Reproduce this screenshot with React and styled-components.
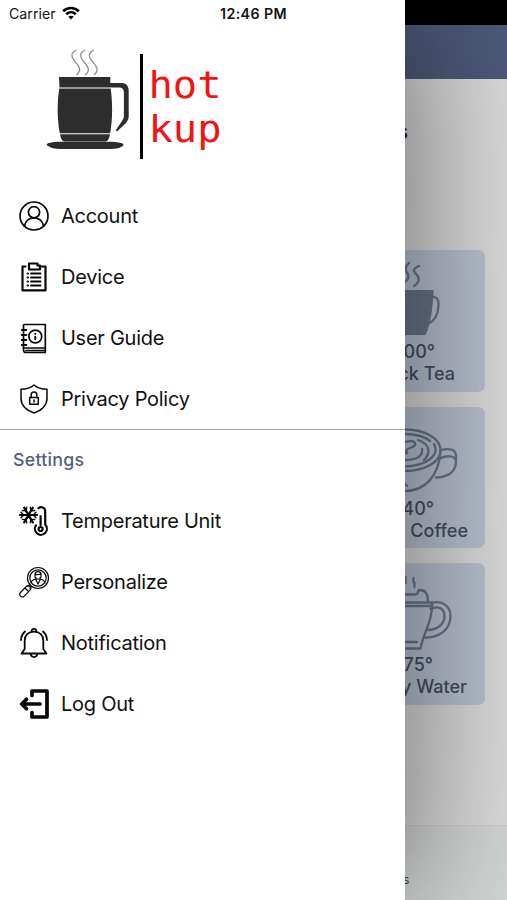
import React from 'react';
import styled, { createGlobalStyle } from 'styled-components';

const MENU = [
  { label: 'Account', icon: 'account' },
  { label: 'Device', icon: 'device' },
  { label: 'User Guide', icon: 'guide' },
  { label: 'Privacy Policy', icon: 'privacy' },
];

const SETTINGS = [
  { label: 'Temperature Unit', icon: 'temperature' },
  { label: 'Personalize', icon: 'personalize' },
  { label: 'Notification', icon: 'notification' },
  { label: 'Log Out', icon: 'logout' },
];

const DRINKS = [
  { temp: '00°', name: 'ck Tea', icon: 'tea', pad: 30, tempPad: 50 },
  { temp: '40°', name: 'Coffee', icon: 'coffee', pad: 17, tempPad: 51 },
  { temp: '75°', name: 'y Water', icon: 'water', pad: 18, tempPad: 52 },
];

const icons = {
  account: (
    <g strokeWidth="1.7">
      <circle cx="16" cy="16" r="14" />
      <circle cx="16" cy="12.2" r="5.6" />
      <path d="M6.500 26c.5-5 4.500-8.200 9.500-8.200s9 3.200 9.500 8.200" />
    </g>
  ),
  device: (
    <g strokeWidth="2.2">
      <path d="M7.500 5.500h-3v23.800h23V5.500H23" />
      <path d="M11 8.500v-6h8.500v2H22v4z" />
      <path
        d="M9.500 12.500h.5M13 12.500h9.500M9.500 16.500h.5M13 16.500h9.500M9.500 20.500h.5M13 20.500h9.500M9.500 24.500h.5M13 24.500h9.500"
        strokeWidth="1.9"
      />
    </g>
  ),
  guide: (
    <g strokeWidth="1.7">
      <path d="M6 2.500h21.300v28H8c-1.700 0-2.500-1-2.500-2.500V3M6 26h21M8 28.500h19" />
      <path d="M3.800 8h4.500M3.800 13h4.500M3.800 18h4.500M3.800 23h4.500" strokeWidth="2" />
      <circle cx="17.300" cy="14.500" r="6.400" />
      <path d="M17.300 11.800v.2M17.300 14.800v2.500" strokeWidth="2" />
    </g>
  ),
  privacy: (
    <g strokeWidth="1.5">
      <path d="M16 2c3.500 3 8 4.200 13 4.300v9C29 22.500 23 27.500 16 30 9 27.500 3 22.500 3 15.300v-9C8 6.200 12.500 5 16 2z" />
      <rect x="11.700" y="14.500" width="8.600" height="6.700" />
      <path d="M13.200 14.500v-2.700c0-3.700 5.600-3.700 5.600 0v2.700M16 17v2" />
    </g>
  ),
  temperature: (
    <g strokeWidth="2.2">
      <path d="M2 10h17M6.200 2.600l8.600 14.800M14.800 2.600L6.200 17.400" />
      <path
        d="M3 7.300L5.700 10 3 12.700M18 7.300L15.300 10l2.700 2.700M4.300 5.500l3.700.3M8.800 2.200L8 5.800M16.700 5.500l-3.700.3M12.200 2.200l.8 3.600M4.300 14.500l3.700-.3M8.800 17.800L8 14.200M16.700 14.500l-3.700-.3M12.200 17.800l.8-3.600"
        strokeWidth="1.3"
      />
      <path d="M20.500 3.200c2.500-2 6.700-1 6.700 3v13.400a6 6 0 1 1-9.200.7" />
      <path d="M22.600 11v9" />
      <circle cx="22.600" cy="24" r="2" />
    </g>
  ),
  personalize: (
    <g strokeWidth="1.2">
      <circle cx="20" cy="12" r="10.500" />
      <circle cx="20" cy="12" r="8.200" />
      <path d="M13 17c.5-2.500 2-3.500 5-4v-1.500M27 17c-.5-2.500-2-3.500-5-4v-1.500M17 11V8c.3-3.200 5.700-3.200 6 0v3c-1 3-5 3-6 0zM17 8.500c3 .5 4-.5 6 0M18 14l2 4 2-4" />
      <path d="M11.700 18.500l-1.800 1.800M13.700 20.300l-1.900 1.900M8.800 20l-6.300 6.500c-2.300 2.500 1.300 6 3.700 3.700l6.300-6.500c1.500-2-1.700-5.200-3.700-3.700zM7 22l3.500 3.500" />
    </g>
  ),
  notification: (
    <g strokeWidth="1.8">
      <path d="M3.500 26.500h25L25.300 22v-8.500c0-5-3.500-8.800-9.300-8.800s-9.300 3.800-9.300 8.800V22z" />
      <path d="M13.800 4.800C12.500.8 19.500.8 18.200 4.800M12.800 27c.3 4 6.100 4 6.400 0M7 4.500C4.500 6.500 3.300 9.500 3 13M25 4.500c2.500 2 3.700 5 4 8.500" />
    </g>
  ),
  logout: (
    <g strokeWidth="3.7">
      <path d="M14 7.500V3h15v26H14v-4.500" />
      <path d="M22 16H5M8.500 11.300L3.700 16l4.800 4.700" />
    </g>
  ),
};

const MenuRow = ({ item }) => (
  <Row>
    <LineIcon viewBox="0 0 32 32">{icons[item.icon]}</LineIcon>
    <Label>{item.label}</Label>
  </Row>
);

const MugLogo = () => (
  <Mug viewBox="0 0 84 102">
    <g fill="none" stroke="#8c8c8c" strokeWidth="1.3">
      <path d="M30.500 2c-6 3-5.500 7-2 11s8.500 9 2 14" />
      <path d="M39.200 2c-6 3-5.500 7-2 11s8.500 9 2 14" />
      <path d="M47.900 2c-6 3-5.500 7-2 11s8.500 9 2 14" />
    </g>
    <path
      d="M13 29h51.300v6H76c4 0 6.700 3 6.700 7.500v26c0 2.500-1 4.200-2.700 6.500L71 83.500l-1.200-1.200 6.200-9.300c1.300-2 1.900-2.800 1.900-5V44.500c0-3.500-1.600-5-4.900-5h-8.500C66.500 52 67 72 64 86c-.8 4-1.500 7-4.500 7.500h-41c-3-.5-3.700-3.500-4.500-7.500-3-14-3-34-.5-46.500z"
      fill="#2d2d2d"
    />
    <path d="M13 40h52M13 85.800h52" stroke="#fff" strokeWidth="1.1" />
    <path
      d="M3 95c3-.8 7-1.200 12-1.200h47c5 0 10 .4 13 1.200 3 .8 3.200 2.400 1 3.500-3 1.800-7 2.500-11 2.500H14c-4 0-8-.7-11-2.500-3-1-3-2.800 0-3.500z"
      fill="#2d2d2d"
    />
  </Mug>
);

const drinkIcons = {
  tea: (
    <>
      <path d="M0 20c5-4 4-7 1-11-1-3 0-5 3-8M14 4c-7 3-6 5-2 9 3 4 2 8-3 11" />
      <path d="M0 28h28.500c-.5 17-3 35-8 45H0z" fill="#6a7388" stroke="none" />
      <path d="M27 35c5-1 7 3 6.500 9-.5 8-4 15-10.500 18" />
    </>
  ),
  coffee: (
    <>
      <path d="M0 10.500c20 0 35.500 9 35.500 21C35.500 43 20 52 0 52" />
      <path d="M0 15c11 0 20 3 25 7M29 25c6 11-7 22-29 22.500" />
      <path d="M35.500 32C34 57 20 72 0 72M0 65l2 2M36 31c8-2 15-1 15 6v5c0 12-9 16-20 16.500M36 39c6-3 14-2 14.500 2" />
      <path d="M0 23c12-3 13 4 5 6-4 1-5 4-2 5h-3M0 41c12 0 18-4 17-11M13 21c12 4 13 13 6 20" />
    </>
  ),
  water: (
    <>
      <path d="M.5 2v6M8.500 3v4l1 1v4M0 19.500h10c5 0 1-4 5-4.500 5 0 8 4 8 11.500" />
      <path d="M0 27.500h27v4c0 16-8 24-11.500 42H0M0 67h12M0 31h26" />
      <path d="M27 28c10-3 18.500 3 18.500 13 0 14-12 22-25.500 21.500M25.500 34c8-4 14 0 14 7 0 8-7 14-17 14" />
    </>
  ),
};

const DrinkCard = ({ drink }) => (
  <Card>
    <DrinkIcon viewBox="0 0 60 80">{drinkIcons[drink.icon]}</DrinkIcon>
    <DrinkText $pad={drink.tempPad}>{drink.temp}</DrinkText>
    <DrinkText $pad={drink.pad}>{drink.name}</DrinkText>
  </Card>
);

export default function App() {
  return (
    <Screen>
      <GlobalStyle />
      <Drawer>
        <StatusBar>
          <Carrier>Carrier</Carrier>
          <Wifi viewBox="0 0 18 14">
            <path d="M1.200 5.200C5.500 1 12.500 1 16.800 5.200M4.200 8.300c2.800-2.700 6.800-2.700 9.600 0" />
            <path d="M6.300 10.800c1.500-1.500 3.900-1.500 5.400 0L9 13.500z" fill="#000" stroke="none" />
          </Wifi>
          <Clock>12:46 PM</Clock>
        </StatusBar>
        <Brand>
          <MugLogo />
          <BrandBar />
          <BrandName>
            <span>hot</span>
            <span>kup</span>
          </BrandName>
        </Brand>
        <Menu>
          {MENU.map((item) => (
            <MenuRow key={item.label} item={item} />
          ))}
        </Menu>
        <SectionTitle>Settings</SectionTitle>
        <Menu>
          {SETTINGS.map((item) => (
            <MenuRow key={item.label} item={item} />
          ))}
        </Menu>
      </Drawer>
      <Page>
        <PageStatus />
        <PageHeader />
        <PageTitle>s</PageTitle>
        <Cards>
          {DRINKS.map((drink) => (
            <DrinkCard key={drink.icon} drink={drink} />
          ))}
        </Cards>
        <TabBar>s</TabBar>
      </Page>
    </Screen>
  );
}

const GlobalStyle = createGlobalStyle`
  body {
    margin: 0;
    font-family: Inter, 'Liberation Sans', sans-serif;
  }
  * {
    box-sizing: border-box;
  }
`;

const Screen = styled.div`
  display: flex;
  width: 507px;
  height: 900px;
  overflow: hidden;
`;

const Drawer = styled.aside`
  position: relative;
  z-index: 1;
  flex: 0 0 405px;
  background-color: #fff;
  box-shadow: 0 0 150px rgba(0, 0, 0, 0.56);
`;

const StatusBar = styled.div`
  display: flex;
  align-items: center;
  height: 27px;
  padding-left: 9px;
  color: #111;
  font-size: 14.2px;
`;

const Carrier = styled.span`
  width: 48px;
`;

const Wifi = styled.svg`
  width: 18px;
  height: 14px;
  margin: 0 0 1px 5px;
  fill: none;
  stroke: #000;
  stroke-width: 2.6;
`;

const Clock = styled.span`
  margin-left: 140px;
  font-weight: 600;
  letter-spacing: 0.42px;
`;

const Brand = styled.div`
  display: flex;
  height: 158px;
  padding: 21px 0 0 46px;
`;

const Mug = styled.svg`
  width: 84px;
  height: 102px;
`;

const BrandBar = styled.div`
  width: 3px;
  height: 105px;
  margin: 6px 0 0 10px;
  background-color: #000;
`;

const BrandName = styled.div`
  display: flex;
  flex-direction: column;
  padding: 15px 0 0 5px;
  color: #f01414;
  font-family: 'DejaVu Sans Mono', monospace;
  font-size: 37.5px;
  line-height: 44px;
  transform: scaleX(1.08);
  transform-origin: left;
`;

const Menu = styled.nav`
  display: flex;
  flex-direction: column;
`;

const Row = styled.div`
  display: flex;
  align-items: center;
  height: 61.1px;
  padding-left: 18px;
`;

const LineIcon = styled.svg`
  width: 32px;
  height: 32px;
  fill: none;
  stroke: #080808;
  stroke-linecap: round;
  stroke-linejoin: round;
`;

const Label = styled.span`
  margin-left: 11px;
  color: #111;
  font-size: 20px;
  letter-spacing: -0.26px;
`;

const SectionTitle = styled.div`
  display: flex;
  align-items: center;
  height: 61px;
  padding: 0 0 2px 13px;
  border-top: 1px solid #a9abb2;
  color: #56607f;
  font-size: 17.8px;
  font-weight: 500;
  letter-spacing: 0.25px;
`;

const Page = styled.main`
  display: flex;
  flex: 1;
  flex-direction: column;
  min-width: 0;
  background-color: #dadada;
`;

const PageStatus = styled.div`
  height: 25px;
  background-color: #000;
`;

const PageHeader = styled.div`
  height: 54px;
  background-color: #4e5a79;
`;

const PageTitle = styled.div`
  height: 171px;
  padding-top: 39px;
  color: #222;
  font-size: 22px;
  font-weight: 600;
  text-indent: -9px;
`;

const Cards = styled.div`
  display: flex;
  flex-direction: column;
  gap: 15px;
  height: 575px;
  padding-right: 22px;
`;

const Card = styled.div`
  height: 141.5px;
  border-radius: 0 7px 7px 0;
  background-color: #b9c1cf;
`;

const DrinkIcon = styled.svg`
  display: block;
  width: 60px;
  height: 80px;
  margin: 12px 0 -0.6px;
  fill: none;
  stroke: #6a7388;
  stroke-width: 2.3;
  stroke-linecap: round;
`;

const DrinkText = styled.div`
  display: flex;
  justify-content: flex-end;
  padding-right: ${({ $pad }) => $pad}px;
  color: #454d61;
  font-size: 18px;
  font-weight: 500;
  line-height: 22px;
  white-space: nowrap;
`;

const TabBar = styled.footer`
  flex: 1;
  padding-top: 46px;
  border-top: 1px solid #cbcfcf;
  background-color: #d3d5d5;
  color: #444;
  font-size: 12px;
  text-indent: -2px;
`;
